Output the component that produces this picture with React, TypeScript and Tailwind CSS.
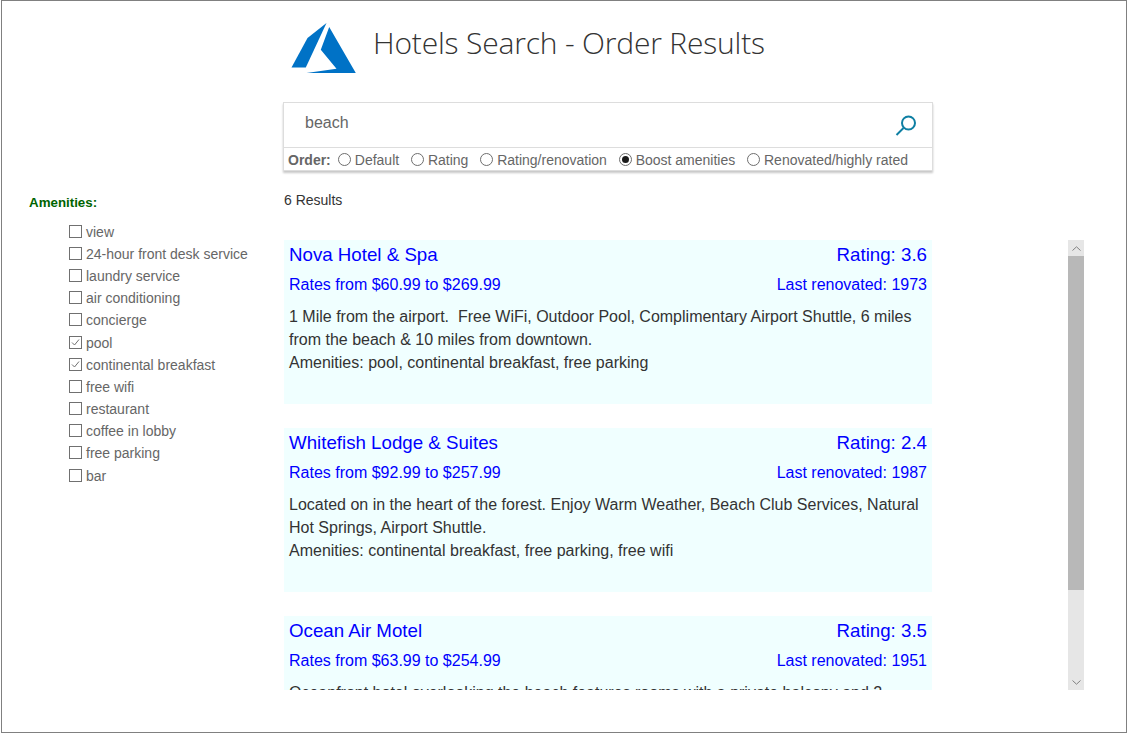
const amenities: [string, boolean][] = [
  ['view', false],
  ['24-hour front desk service', false],
  ['laundry service', false],
  ['air conditioning', false],
  ['concierge', false],
  ['pool', true],
  ['continental breakfast', true],
  ['free wifi', false],
  ['restaurant', false],
  ['coffee in lobby', false],
  ['free parking', false],
  ['bar', false],
];

const orders: [string, boolean][] = [
  ['Default', false],
  ['Rating', false],
  ['Rating/renovation', false],
  ['Boost amenities', true],
  ['Renovated/highly rated', false],
];

const hotels = [
  {
    name: 'Nova Hotel & Spa',
    rating: '3.6',
    rates: 'Rates from $60.99 to $269.99',
    year: '1973',
    lines: [
      '1 Mile from the airport.\u00a0 Free WiFi, Outdoor Pool, Complimentary Airport Shuttle, 6 miles',
      'from the beach & 10 miles from downtown.',
      'Amenities: pool, continental breakfast, free parking',
    ],
  },
  {
    name: 'Whitefish Lodge & Suites',
    rating: '2.4',
    rates: 'Rates from $92.99 to $257.99',
    year: '1987',
    lines: [
      'Located on in the heart of the forest. Enjoy Warm Weather, Beach Club Services, Natural',
      'Hot Springs, Airport Shuttle.',
      'Amenities: continental breakfast, free parking, free wifi',
    ],
  },
  {
    name: 'Ocean Air Motel',
    rating: '3.5',
    rates: 'Rates from $63.99 to $254.99',
    year: '1951',
    lines: ['Oceanfront hotel overlooking the beach features rooms with a private balcony and 2'],
  },
];

function Radio({ checked }: { checked: boolean }) {
  return (
    <span className="w-[13px] h-[13px] mb-[2px] rounded-full border border-[#6e6e6e] bg-white flex items-center justify-center shrink-0">
      {checked && <span className="w-[7px] h-[7px] rounded-full bg-[#1a1a1a]" />}
    </span>
  );
}

function Check({ checked }: { checked: boolean }) {
  return (
    <span className="w-[13px] h-[13px] mb-[2px] border border-[#707070] bg-white flex items-center justify-center shrink-0">
      {checked && (
        <svg width="11" height="11" viewBox="0 0 11 11" fill="none">
          <path d="M2 5.500 L4.500 8 L9 2.500" stroke="#707070" strokeWidth="1" />
        </svg>
      )}
    </span>
  );
}

function Card({ hotel }: { hotel: (typeof hotels)[number] }) {
  return (
    <div className="bg-[#f0ffff] h-[164px] shrink-0 px-[5px] pt-[2px]">
      <div className="flex justify-between text-[18.72px] leading-[26px] text-[#0000ff]">
        <span>{hotel.name}</span>
        <span>Rating: {hotel.rating}</span>
      </div>
      <div className="flex justify-between text-[16px] leading-[24px] text-[#0000ff] mt-[5px]">
        <span>{hotel.rates}</span>
        <span>Last renovated: {hotel.year}</span>
      </div>
      <div className="text-[16px] leading-[23px] text-[#333333] mt-[8px] whitespace-nowrap">
        {hotel.lines.map((l) => (
          <div key={l}>{l}</div>
        ))}
      </div>
    </div>
  );
}

export default function App() {
  return (
    <div className="bg-white h-[737px] font-['Liberation_Sans',Arial,sans-serif] overflow-hidden">
      <div className="ml-px w-[1126px] h-[733px] border border-[#808080] flex">
        <aside className="w-[281px] shrink-0 pt-[194px] pl-[27px]">
          <div className="text-[13.33px] leading-[16px] font-bold text-[#006400]">Amenities:</div>
          <ul className="mt-[10px] pl-[40px]">
            {amenities.map(([label, on]) => (
              <li key={label} className="flex items-center gap-[4px] h-[22.2px] text-[14px] text-[#666666] whitespace-nowrap">
                <Check checked={on} />
                <span>{label}</span>
              </li>
            ))}
          </ul>
        </aside>
        <main className="w-[801px] shrink-0 flex flex-col">
          <header className="flex items-start h-[101px] pl-[8px] pt-[22px]">
            <svg width="66" height="52" viewBox="0 0 66 52" className="shrink-0">
              <path d="M35.500 0 L16.500 15 L0.500 44.500 L14.800 44.500 Z" fill="#0072c6" />
              <path d="M38.200 4 L29.800 26.700 L45.500 45.700 L15.500 50 L64.800 50 Z" fill="#0072c6" />
            </svg>
            <h1 className="ml-[16px] -mt-[2px] text-[30px] leading-[44px] font-light tracking-[-0.18px] text-[#333333] font-['Open_Sans',sans-serif] whitespace-nowrap">
              Hotels Search - Order Results
            </h1>
          </header>
          <section className="w-[650px] h-[69px] border border-[#dddddd] shadow-[0_2px_2px_rgba(0,0,0,0.22)] bg-white shrink-0">
            <div className="h-[45px] border-b border-[#dddddd] flex items-center justify-between pl-[21px] pr-[14px]">
              <span className="text-[16px] leading-[24px] text-[#666666] -mt-[5px]">beach</span>
              <svg width="24" height="24" viewBox="0 0 24 24" fill="none" className="mt-px">
                <circle cx="14.500" cy="9" r="6.500" stroke="#0e7fa3" strokeWidth="2" />
                <path d="M9.500 14 L2.500 21" stroke="#0e7fa3" strokeWidth="2" />
              </svg>
            </div>
            <div className="h-[22px] flex items-center pl-[4px] pt-[2px] text-[14px] text-[#666666] whitespace-nowrap">
              <span className="font-bold mr-[7px]">Order:</span>
              {orders.map(([label, on]) => (
                <span key={label} className="flex items-center gap-[4px] mr-[11.75px]">
                  <Radio checked={on} />
                  <span>{label}</span>
                </span>
              ))}
            </div>
          </section>
          <div className="text-[14px] leading-[20px] text-[#333333] mt-[19px] ml-px h-[30px] shrink-0">6 Results</div>
          <div className="mt-[20px] h-[450px] flex justify-between overflow-hidden">
            <div className="ml-px w-[648px] flex flex-col gap-[24px] overflow-hidden">
              {hotels.map((h) => (
                <Card key={h.name} hotel={h} />
              ))}
            </div>
            <div className="w-[16px] h-[450px] bg-[#e6e6e6] flex flex-col">
              <div className="h-[16px] flex items-center justify-center shrink-0">
                <svg width="9" height="5" viewBox="0 0 9 5" fill="none">
                  <path d="M0.500 4.500 L4.500 0.800 L8.500 4.500" stroke="#808080" />
                </svg>
              </div>
              <div className="h-[334px] bg-[#b8b8b8] shrink-0" />
              <div className="flex-1" />
              <div className="h-[16px] flex items-center justify-center shrink-0">
                <svg width="9" height="5" viewBox="0 0 9 5" fill="none">
                  <path d="M0.500 0.500 L4.500 4.200 L8.500 0.500" stroke="#808080" />
                </svg>
              </div>
            </div>
          </div>
        </main>
      </div>
    </div>
  );
}
